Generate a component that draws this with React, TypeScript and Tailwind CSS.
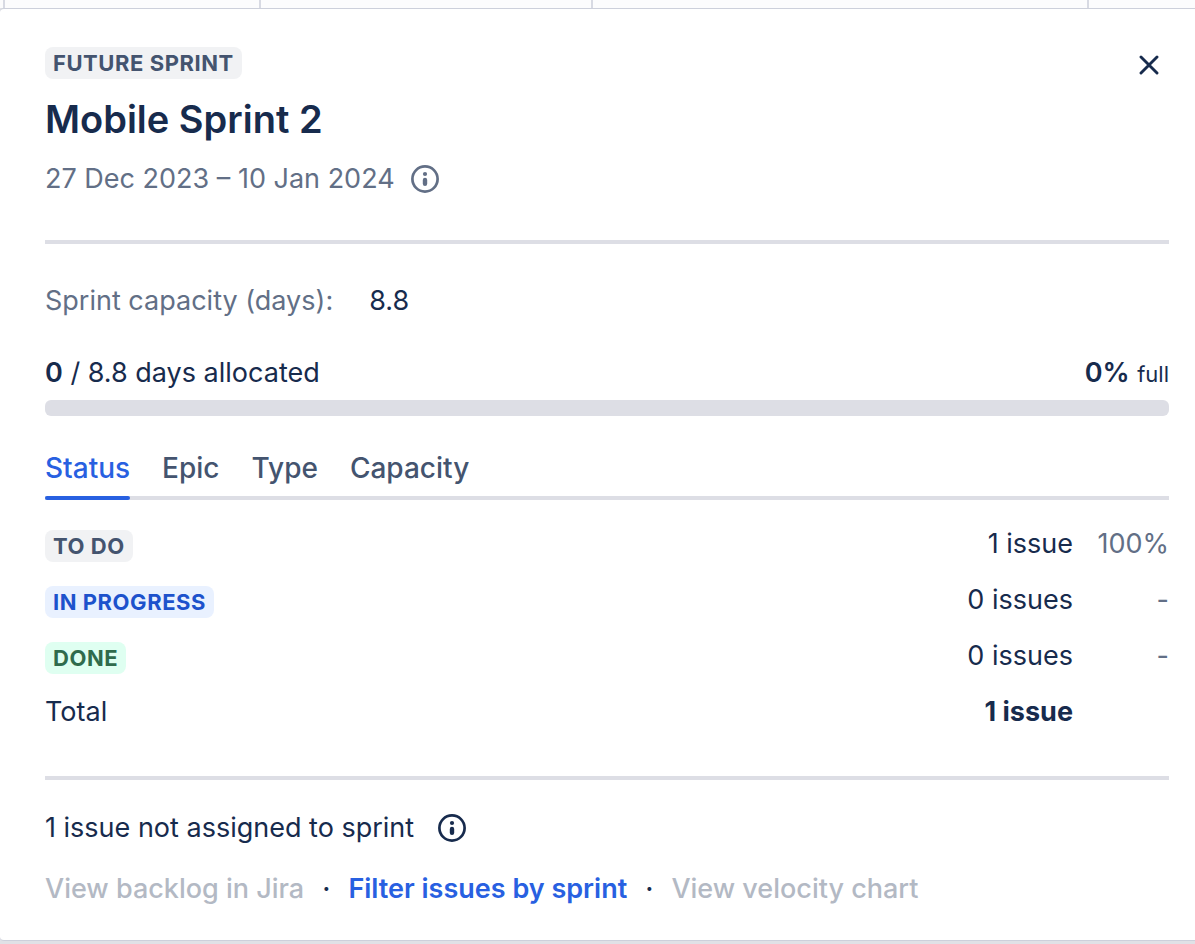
import { useState } from "react";

// ── Data ──────────────────────────────────────────────────────────────────────

type Tone = "neutral" | "progress" | "success";

const TONE: Record<Tone, string> = {
  neutral: "bg-[#f1f2f4] text-[#44546f]",
  progress: "bg-[#e9f1ff] text-[#1d52cc]",
  success: "bg-[#dffff1] text-[#2f6b4c]",
};

const TABS = ["Status", "Epic", "Type", "Capacity"];

const ROWS: { label: string; tone: Tone; count: string; share: string }[] = [
  { label: "TO DO", tone: "neutral", count: "1 issue", share: "100%" },
  { label: "IN PROGRESS", tone: "progress", count: "0 issues", share: "-" },
  { label: "DONE", tone: "success", count: "0 issues", share: "-" },
];

// ── Small parts ───────────────────────────────────────────────────────────────

function Lozenge({ label, tone }: { label: string; tone: Tone }) {
  return (
    <span className={`inline-block rounded-lg px-2 text-[22px] leading-8 font-bold tracking-wide whitespace-nowrap ${TONE[tone]}`}>
      {label}
    </span>
  );
}

function InfoIcon() {
  return (
    <svg viewBox="0 0 28 28" className="block size-7" aria-hidden>
      <circle cx="14" cy="14" r="12.6" fill="none" stroke="currentColor" strokeWidth="2.7" />
      <circle cx="14" cy="9" r="2.1" fill="currentColor" />
      <rect x="11.8" y="12.8" width="4.4" height="8.2" rx="2.2" fill="currentColor" />
    </svg>
  );
}

function CloseIcon() {
  return (
    <svg viewBox="0 0 20 20" className="block size-5" aria-hidden>
      <path d="M2 2 18 18 M18 2 2 18" fill="none" stroke="currentColor" strokeWidth="2.9" strokeLinecap="round" />
    </svg>
  );
}

// Bottom edge of the timeline columns behind the flyout.
function TimelineEdge() {
  return (
    <div className="grid h-2 grid-cols-[5fr_256fr_332fr_496fr_106fr] bg-[#fcfcfd]" aria-hidden>
      <div className="border-r-2 border-[#d8dae3]" />
      <div className="border-r-2 border-[#d8dae3]" />
      <div className="border-r-2 border-[#d8dae3]" />
      <div className="border-r-2 border-[#d8dae3]" />
      <div />
    </div>
  );
}

// ── Flyout ────────────────────────────────────────────────────────────────────

export default function App() {
  const [tab, setTab] = useState("Status");

  return (
    <div className="bg-[#e0e1e6] pb-1 font-['Inter',sans-serif] text-[27px] leading-8 text-[#172b4d]">
      <TimelineEdge />

      <section className="rounded-l border-y border-[#cdd0db] bg-white pt-[38px] pr-[26px] pb-[35px] pl-[45px]" aria-labelledby="sprint-title">
        <header className="flex items-start justify-between">
          <div>
            <div className="flex">
              <Lozenge label="FUTURE SPRINT" tone="neutral" />
            </div>
            <h1 id="sprint-title" className="mt-4 text-[38px] leading-12 font-semibold">Mobile Sprint 2</h1>
            <div className="mt-5 flex items-center gap-4 text-[#626f86]">
              <span>27 Dec 2023 – 10 Jan 2024</span>
              <button type="button" aria-label="About sprint dates"><InfoIcon /></button>
            </div>
          </div>
          <button type="button" aria-label="Close" className="mt-2 mr-[10px]"><CloseIcon /></button>
        </header>

        <hr className="mt-[45px] border-t-4 border-[#dddee5]" />

        <dl className="mt-[41px] flex gap-9">
          <dt className="text-[#626f86]">Sprint capacity (days):</dt>
          <dd>8.8</dd>
        </dl>

        <div className="mt-10 flex items-baseline justify-between">
          <p><strong className="font-semibold">0</strong> / 8.8 days allocated</p>
          <p><strong className="font-semibold">0%</strong> <span className="text-[22px]">full</span></p>
        </div>
        <div
          role="progressbar" aria-label="Days allocated" aria-valuenow={0} aria-valuemin={0} aria-valuemax={100}
          className="mt-[10px] h-4 rounded-md bg-[#dddee5]"
        />

        <div role="tablist" aria-label="Breakdown" className="mt-9 flex gap-8 border-b-4 border-[#dddee5] text-[28px] leading-8 font-medium">
          {TABS.map(t => (
            <button
              key={t} type="button" role="tab" aria-selected={t === tab} onClick={() => setTab(t)}
              className={`-mb-1 flex flex-col gap-3 ${t === tab ? "text-[#2860e1]" : "text-[#44546f]"}`}
            >
              <span>{t}</span>
              <span className={`h-1 w-full rounded-xs ${t === tab ? "bg-[#2860e1]" : ""}`} />
            </button>
          ))}
        </div>

        <table className="mt-4 w-full">
          <tbody>
            {ROWS.map(r => (
              <tr key={r.label} className="h-14">
                <th scope="row" className="pt-1 text-left"><div className="flex"><Lozenge label={r.label} tone={r.tone} /></div></th>
                <td className="text-right">{r.count}</td>
                <td className="w-24 text-right text-[#626f86]">{r.share}</td>
              </tr>
            ))}
            <tr className="h-14">
              <th scope="row" className="text-left font-normal">Total</th>
              <td className="text-right font-bold">1 issue</td>
              <td />
            </tr>
          </tbody>
        </table>

        <hr className="mt-9 border-t-4 border-[#dddee5]" />

        <div className="mt-8 flex items-center gap-6">
          <span>1 issue not assigned to sprint</span>
          <button type="button" aria-label="About unassigned issues"><InfoIcon /></button>
        </div>

        <nav className="mt-[29px] flex gap-[18px] font-medium">
          <a aria-disabled="true" className="text-[#b3b9c4]">View backlog in Jira</a>
          <span aria-hidden>·</span>
          <a href="#filter" className="font-semibold text-[#2860e1]">Filter issues by sprint</a>
          <span aria-hidden>·</span>
          <a aria-disabled="true" className="text-[#b3b9c4]">View velocity chart</a>
        </nav>
      </section>
    </div>
  );
}
